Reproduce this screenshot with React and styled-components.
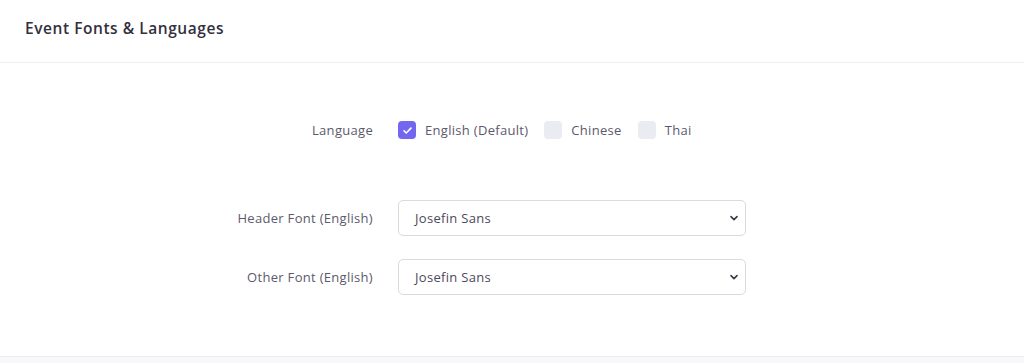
import React from "react";
import styled, { createGlobalStyle } from "styled-components";

const Global = createGlobalStyle`
  html, body { margin: 0; padding: 0; background: #f8f8fb; }
  body { font-family: "Open Sans", "Noto Sans", sans-serif; }
`;

const Card = styled.section`
  background: #ffffff;
  border-bottom: 1px solid #ebebf0;
`;

const Header = styled.header`
  height: 62px;
  display: flex;
  align-items: center;
  padding: 0 25px;
  border-bottom: 1px solid #efeff3;
`;

const Title = styled.h2`
  margin: 0;
  font-size: 15.5px;
  font-weight: 600;
  color: #33303e;
  letter-spacing: 0.55px;
  transform: translateY(-3px);
`;

const Body = styled.div`
  padding: 49px 0 61px;
  display: grid;
  grid-template-columns: 373px 348px;
  column-gap: 25px;
  row-gap: 23px;
  align-items: center;
`;

const Label = styled.label`
  justify-self: end;
  font-size: 13px;
  letter-spacing: 0.3px;
  color: #5d596c;
`;

const CheckGroup = styled.div`
  display: flex;
  align-items: center;
  height: 36px;
  margin-bottom: 29px;
  width: 420px;
`;

const LangLabel = styled(Label)`
  margin-bottom: 29px;
`;

const CheckItem = styled.label`
  display: flex;
  align-items: center;
  gap: 9px;
  margin-right: 16px;
  font-size: 13px;
  letter-spacing: 0.3px;
  color: #5d596c;
`;

const Box = styled.span`
  width: 18px;
  height: 18px;
  border-radius: 4px;
  background: ${(p) => (p.$checked ? "#7367f0" : "#ebebf2")};
  display: inline-flex;
  align-items: center;
  justify-content: center;
`;

const SelectBox = styled.div`
  height: 36px;
  box-sizing: border-box;
  border: 1px solid #dbdade;
  border-radius: 5px;
  display: flex;
  align-items: center;
  justify-content: space-between;
  padding: 0 6px 0 16px;
  font-size: 13px;
  letter-spacing: 0.3px;
  color: #4b4a5a;
`;

const Check = () => (
  <svg width="11" height="11" viewBox="0 0 12 12" fill="none">
    <path d="M2.2 6.3l2.4 2.4 5.2-5.2" stroke="#fff" strokeWidth="1.8" strokeLinecap="round" strokeLinejoin="round" />
  </svg>
);

const Chevron = () => (
  <svg width="10" height="10" viewBox="0 0 10 10" fill="none">
    <path d="M2 3.6l3 3 3-3" stroke="#3a3a48" strokeWidth="1.6" strokeLinecap="round" strokeLinejoin="round" />
  </svg>
);

const langs = [
  { name: "English (Default)", checked: true },
  { name: "Chinese", checked: false },
  { name: "Thai", checked: false },
];

export default function App() {
  return (
    <>
      <Global />
      <Card>
        <Header>
          <Title>Event Fonts &amp; Languages</Title>
        </Header>
        <Body>
          <LangLabel>Language</LangLabel>
          <CheckGroup>
            {langs.map((l) => (
              <CheckItem key={l.name}>
                <Box $checked={l.checked}>{l.checked && <Check />}</Box>
                {l.name}
              </CheckItem>
            ))}
          </CheckGroup>
          <Label>Header Font (English)</Label>
          <SelectBox>
            Josefin Sans
            <Chevron />
          </SelectBox>
          <Label>Other Font (English)</Label>
          <SelectBox>
            Josefin Sans
            <Chevron />
          </SelectBox>
        </Body>
      </Card>
    </>
  );
}
